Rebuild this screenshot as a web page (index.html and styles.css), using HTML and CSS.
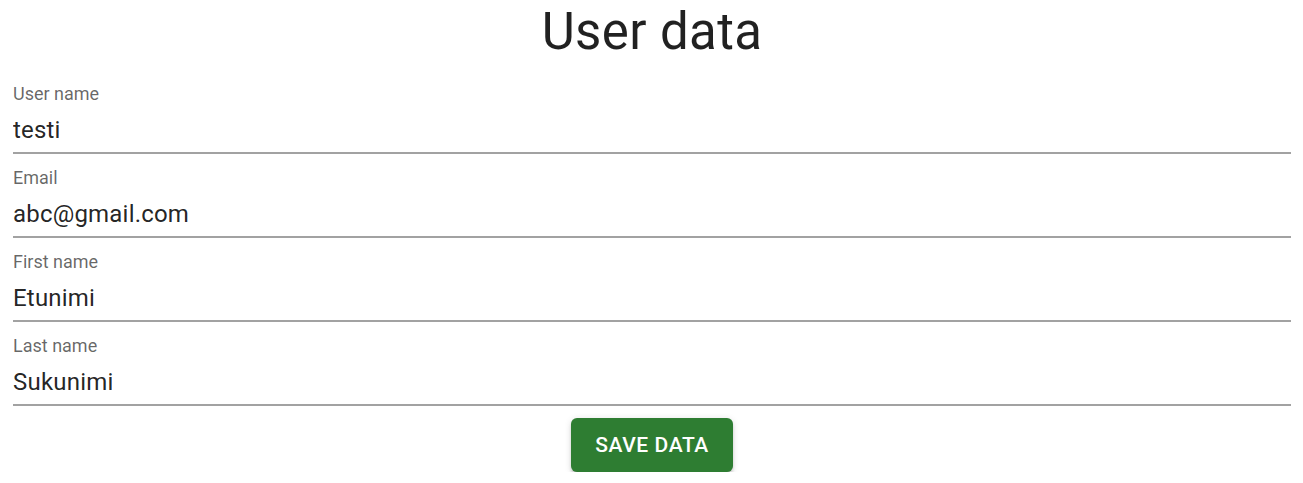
FILE: index.html
```html
<!DOCTYPE html>
<html lang="en">
<head>
<meta charset="utf-8">
<title>User data</title>
<link rel="stylesheet" href="styles.css">
</head>
<body>
<main class="page">
  <h1 class="title">User data</h1>
  <form class="form">
    <div class="field">
      <label class="label" for="username">User name</label>
      <div class="input-root"><input class="input" id="username" type="text" value="testi"></div>
    </div>
    <div class="field">
      <label class="label" for="email">Email</label>
      <div class="input-root"><input class="input" id="email" type="text" value="abc@gmail.com"></div>
    </div>
    <div class="field">
      <label class="label" for="firstname">First name</label>
      <div class="input-root"><input class="input" id="firstname" type="text" value="Etunimi"></div>
    </div>
    <div class="field">
      <label class="label" for="lastname">Last name</label>
      <div class="input-root"><input class="input" id="lastname" type="text" value="Sukunimi"></div>
    </div>
    <div class="actions">
      <button class="btn" type="button">Save data</button>
    </div>
  </form>
</main>
</body>
</html>
```

FILE: styles.css
```css
html, body {
  margin: 0;
  padding: 0;
  background: #ffffff;
}

body {
  font-family: Roboto, "Liberation Sans", Arial, sans-serif;
  color: rgba(0, 0, 0, 0.87);
}

.page {
  padding: 0 12px 0 13px;
}

.title {
  margin: 0;
  font-size: 51px;
  font-weight: 400;
  line-height: 63px;
  letter-spacing: 0.37px;
  text-align: center;
  color: rgba(0, 0, 0, 0.87);
}

.form {
  display: flex;
  flex-direction: column;
  gap: 12px;
  margin-top: 19px;
}

.field {
  display: flex;
  flex-direction: column;
}

.label {
  display: block;
  height: 24px;
  font-size: 18px;
  line-height: 24px;
  color: rgba(0, 0, 0, 0.6);
}

.input-root {
  border-bottom: 2px solid #a2a2a2;
}

.input {
  display: block;
  width: 100%;
  box-sizing: border-box;
  border: 0;
  outline: none;
  background: transparent;
  margin: 0;
  padding: 6px 0 5px;
  height: 46px;
  font-family: Roboto, "Liberation Sans", Arial, sans-serif;
  font-size: 24px;
  line-height: 35px;
  color: rgba(0, 0, 0, 0.87);
  letter-spacing: 0.2px;
}

.actions {
  display: flex;
  justify-content: center;
}

.btn {
  font-family: Roboto, "Liberation Sans", Arial, sans-serif;
  font-size: 21px;
  font-weight: 500;
  line-height: 36px;
  letter-spacing: 0.6px;
  text-transform: uppercase;
  color: #ffffff;
  background: #2e7d32;
  border: 0;
  border-radius: 6px;
  padding: 9px 24px;
  height: 54px;
  min-width: 96px;
  cursor: pointer;
  box-shadow: 0 4.5px 1.5px -3px rgba(0, 0, 0, 0.2), 0 3px 3px 0 rgba(0, 0, 0, 0.14), 0 1.5px 7.5px 0 rgba(0, 0, 0, 0.12);
}
```
